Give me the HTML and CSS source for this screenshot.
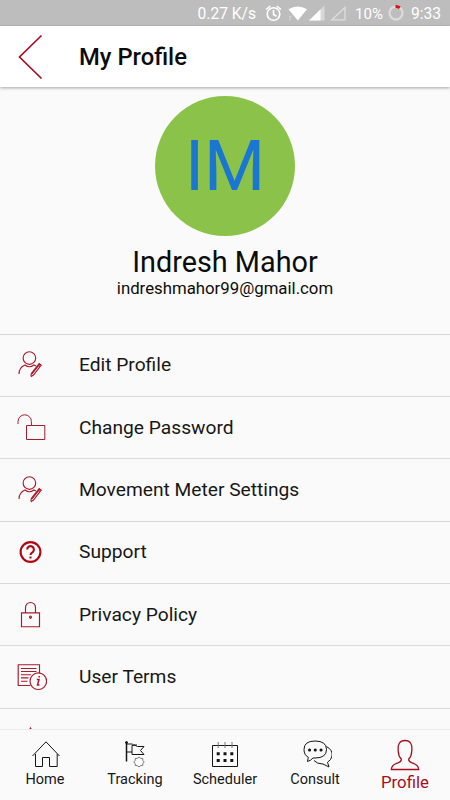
FILE: index.html
```html
<!DOCTYPE html>
<html lang="en">
<head>
<meta charset="utf-8">
<title>My Profile</title>
<link rel="stylesheet" href="styles.css">
</head>
<body>
<div class="app">
  <div class="status">
    <span class="speed">0.27 K/s</span>
    <svg class="status-icons" width="86" height="26" viewBox="0 0 86 26">
      <g fill="none" stroke="#fff" stroke-width="1.6"><circle cx="10.500" cy="14" r="6.300"/><path d="M3 9.500l4.300-3.500M18 9.500l-4.300-3.500M10.500 10v4.500l3 1.800"/></g>
      <path fill="#fff" d="M25.500 9.300Q34.500 3.500 44 9.300L34.800 20.500Z"/>
      <path stroke="#eee" stroke-width="1" d="M27 16v1.500M27 18.500v1.500"/>
      <path fill="#d8d8d8" d="M46 20.500L61.500 5.500V20.500Z"/>
      <path fill="#fff" d="M46 20.500L57.500 9.500V20.500Z"/>
      <path fill="none" stroke="#dedede" stroke-width="1.300" d="M69 19.800L82 7.500V19.800Z"/>
    </svg>
    <span class="percent">10%</span>
    <svg class="battery" width="18" height="26" viewBox="0 0 18 26">
      <circle cx="9" cy="13" r="6.500" fill="none" stroke="#dadada" stroke-width="2.300"/>
      <path d="M8.500 6.500Q11 6.300 12.800 7.700" fill="none" stroke="#d51313" stroke-width="3"/>
    </svg>
    <span class="clock">9:33</span>
  </div>
  <header class="header">
    <svg class="back" width="26" height="46" viewBox="0 0 26 46"><path d="M24.500 1.500L2.500 23L24.500 44.500" fill="none" stroke="#a50f20" stroke-width="1.700"/></svg>
    <h1 class="title">My Profile</h1>
  </header>
  <main class="content">
    <section class="person">
      <div class="avatar"><span class="initials">IM</span></div>
      <div class="name">Indresh Mahor</div>
      <div class="email">indreshmahor99@gmail.com</div>
    </section>
    <ul class="menu">
      <li class="row">
        <svg class="icon" viewBox="0 0 30 30"><circle cx="12.400" cy="8" r="6.300"/><path d="M2 24Q2 17.500 8 15Q12.400 18.500 16.800 15L19 16M13.800 25.800L14.500 23.200L22.200 13.500L24.200 15L16.500 25L13.800 26.800M15 23.800L22.500 14.300M21 15L23 16.500"/></svg>
        <span class="label">Edit Profile</span>
      </li>
      <li class="row">
        <svg class="icon lock" viewBox="0 0 30 30"><path d="M1 11V8.500A6.700 6.700 0 0 1 14.400 8.500V12.500"/><path d="M9.500 12.500H27.800V26.500H9.500Z"/></svg>
        <span class="label">Change Password</span>
      </li>
      <li class="row">
        <svg class="icon" viewBox="0 0 30 30"><circle cx="12.400" cy="8" r="6.300"/><path d="M2 24Q2 17.500 8 15Q12.400 18.500 16.800 15L19 16M13.800 25.800L14.500 23.200L22.200 13.500L24.200 15L16.500 25L13.800 26.800M15 23.800L22.500 14.300M21 15L23 16.500"/></svg>
        <span class="label">Movement Meter Settings</span>
      </li>
      <li class="row">
        <svg class="icon help" viewBox="0 0 30 30"><circle cx="13.500" cy="15" r="9.900"/><path d="M10.200 12.600A3.350 3.350 0 1 1 15.700 15.100Q13.500 16.400 13.500 18M13.500 19.500V21.500"/></svg>
        <span class="label">Support</span>
      </li>
      <li class="row">
        <svg class="icon" viewBox="0 0 30 30"><path d="M4.500 12.800H22.500V26.700H4.500ZM8.500 12.500V7.500A5 5 0 0 1 18.500 7.500V12.500M13.500 17.500V19"/><circle cx="13.500" cy="17" r="1"/></svg>
        <span class="label">Privacy Policy</span>
      </li>
      <li class="row">
        <svg class="icon" viewBox="0 0 30 30"><path d="M13 23.500H1.200V2.700H22.500V11M4 6.500H19.500M4 9.500H19.500M4 12.700H14M4 15.900H11.500M4 19.200H10.500"/><circle cx="21.300" cy="19.200" r="8.300"/><path stroke-width="1.500" d="M19.800 17.500H22L20.500 23H22.500M22.200 14V15.500"/></svg>
        <span class="label">User Terms</span>
      </li>
      <li class="row">
        <svg class="icon rate" viewBox="0 0 30 30"><path d="M13.500 5L17 12H24L18.500 17L21 25L13.500 20L6 25L8.500 17L3 12H10Z"/></svg>
      </li>
    </ul>
  </main>
  <nav class="tabs">
    <div class="tab">
      <svg class="tab-icon home" viewBox="0 0 30 32"><path d="M1.500 17L15 2.800L28.500 17M4.500 15V27.500H11.500V18.500H18.500V27.500H26.200V15"/></svg>
      <span>Home</span>
    </div>
    <div class="tab">
      <svg class="tab-icon" viewBox="0 0 30 32"><path stroke-width="1.500" d="M6.500 3V22.500"/><circle cx="6.500" cy="3.500" r="1" fill="#111"/><path d="M7 5H12.500L13.500 6H17M7 13H12M12 6.500Q15 5.500 17.500 7.500H24L20.500 11.500L24 15.500H12Z"/><path stroke="#777" d="M19 18L20.500 19.300L22.700 19.400L22.900 21.500L24.200 23L22.900 24.500L22.700 26.500L20.500 26.700L19 28L17.500 26.700L15.300 26.500L15.100 24.500L13.800 23L15.100 21.500L15.300 19.400L17.500 19.300Z"/></svg>
      <span>Tracking</span>
    </div>
    <div class="tab">
      <svg class="tab-icon" viewBox="0 0 30 32"><path d="M2.500 6.500H27.500V27.500H2.500Z"/><path stroke="#777" d="M8.200 3V9M15 3V9M22 3V9"/><path stroke-width="3" stroke-dasharray="3 3.800" d="M6.700 14.800H23.300M6.700 21.500H23.300"/></svg>
      <span>Scheduler</span>
    </div>
    <div class="tab">
      <svg class="tab-icon chat" viewBox="0 0 30 32"><path d="M5.500 22.500L6.300 18.300Q2 16 2 10.500Q2 2 13 2Q24.500 2 24.500 10.500Q24.500 19 13 19H11Q9 21.500 5.500 22.500Z"/><path d="M24.500 7.500Q31 11 30 17Q29.300 21 25.500 23.300L27 28L21 25Q15 25 12 21.500"/><path stroke-width="3" stroke-linecap="round" d="M7.500 11h.1M13.200 11h.1M19 11h.1"/></svg>
      <span>Consult</span>
    </div>
    <div class="tab active">
      <svg class="tab-icon" viewBox="0 0 30 32"><path d="M1.300 30.500Q1.600 25.500 8 23.800Q11.500 23 11.300 20Q8.500 17.500 8.300 12.500Q7 1.500 15 1.500Q23 1.500 21.700 12.500Q21.500 17.500 18.700 20Q18.500 23 22 23.800Q28.400 25.500 28.700 30.500Z"/></svg>
      <span>Profile</span>
    </div>
  </nav>
</div>
</body>
</html>
```
FILE: styles.css
```css
* { box-sizing: border-box; }
body { margin: 0; font-family: Roboto, sans-serif; color: #171717; background: #fafafa; }
.app { width: 450px; height: 800px; display: flex; flex-direction: column; overflow: hidden; }
.status { flex: none; height: 26px; display: flex; align-items: center; justify-content: flex-end; background: #bdbdbd; color: #fff; font-size: 15.6px; line-height: 24px; padding: 2px 9px 0 0; white-space: nowrap; }
.status svg { display: block; flex: none; margin-top: -2px; }
.speed { margin-right: 7px; }
.status-icons { margin-right: 6px; }
.percent { margin-right: 4px; font-size: 15px; }
.battery { margin-right: 6px; }
.header { flex: 0 0 61px; display: flex; align-items: center; background: #fff; box-shadow: 0 1px 3px rgba(0, 0, 0, .35); position: relative; padding-left: 17px; }
.back { display: block; margin-right: 36px; }
.title { margin: 0; font-size: 23.8px; font-weight: 500; line-height: 28px; color: #0c0c0c; }
.content { flex: 1; min-height: 0; overflow: hidden; }
.person { height: 246.6px; padding-top: 9px; display: flex; flex-direction: column; align-items: center; color: #0c0c0c; }
.avatar { width: 140px; height: 140px; border-radius: 50%; background: #8bc34a; display: flex; align-items: center; justify-content: center; }
.initials { color: #1976d2; font-size: 70px; line-height: 80px; }
.name { font-size: 28.8px; line-height: 34px; margin-top: 9px; }
.email { font-size: 16.8px; line-height: 20px; margin-top: -1px; }
.menu { list-style: none; margin: 0; padding: 0; }
.row { height: 62.35px; border-top: 1px solid #d9d9d9; display: flex; align-items: center; padding-left: 17px; }
.icon { width: 30px; height: 30px; margin-right: 32px; fill: none; stroke: #a51d2c; stroke-width: 1.15; }
.lock { stroke-width: 1; }
.help { stroke: #ad0914; stroke-width: 2.1; }
.rate { margin-top: -2px; }
.label { font-size: 19.2px; line-height: 24px; }
.tabs { flex: 0 0 71px; display: grid; grid-template-columns: repeat(5, 1fr); background: #fafafa; border-top: 1px solid #ececec; }
.tab { display: flex; flex-direction: column; align-items: center; font-size: 14.5px; line-height: 18px; padding-top: 9px; }
.tab-icon { width: 30px; height: 32px; fill: none; stroke: #151515; stroke-width: 1; }
.home { margin-left: 2px; }
.chat { margin-left: 3px; }
.active { color: #a70d20; font-size: 16.8px; line-height: 22px; }
.active .tab-icon { stroke: #a70d20; stroke-width: 1.3; }
```
